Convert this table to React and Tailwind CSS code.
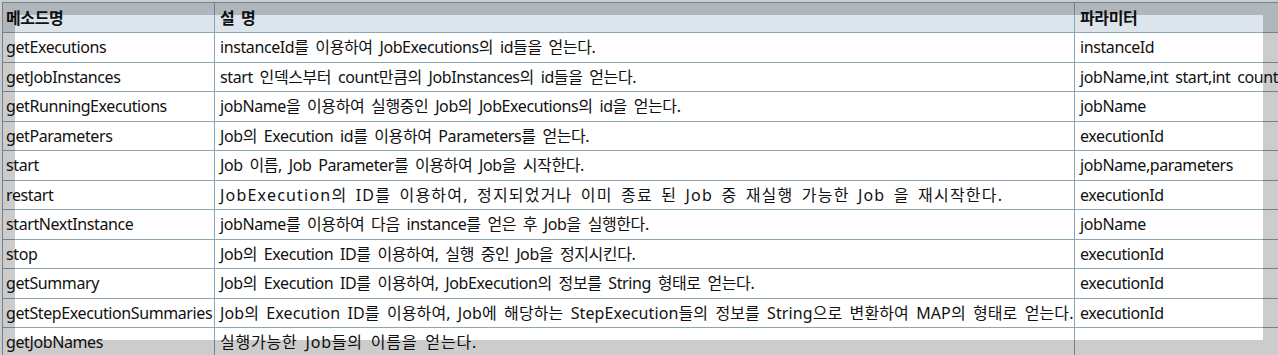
const rows = [
  ["getExecutions", "instanceId를 이용하여 JobExecutions의 id들을 얻는다.", "instanceId"],
  ["getJobInstances", "start 인덱스부터 count만큼의 JobInstances의 id들을 얻는다.", "jobName,int start,int count"],
  ["getRunningExecutions", "jobName을 이용하여 실행중인 Job의 JobExecutions의 id을 얻는다.", "jobName"],
  ["getParameters", "Job의 Execution id를 이용하여 Parameters를 얻는다.", "executionId"],
  ["start", "Job 이름, Job Parameter를 이용하여 Job을 시작한다.", "jobName,parameters"],
  ["restart", "JobExecution의 ID를 이용하여, 정지되었거나 이미 종료 된 Job 중 재실행 가능한 Job 을 재시작한다.", "executionId", "tracking-[1.2px]"],
  ["startNextInstance", "jobName를 이용하여 다음 instance를 얻은 후 Job을 실행한다.", "jobName"],
  ["stop", "Job의 Execution ID를 이용하여, 실행 중인 Job을 정지시킨다.", "executionId"],
  ["getSummary", "Job의 Execution ID를 이용하여, JobExecution의 정보를 String 형태로 얻는다.", "executionId"],
  ["getStepExecutionSummaries", "Job의 Execution ID를 이용하여, Job에 해당하는 StepExecution들의 정보를 String으로 변환하여 MAP의 형태로 얻는다.", "executionId", "tracking-[0.1px]"],
  ["getJobNames", "실행가능한 Job들의 이름을 얻는다.", "", "tracking-[0.8px]"],
];

const cell = "h-[29.5px] border border-[#8ca6b5] px-[5px] whitespace-nowrap";
const head = "h-[30px] border border-[#8ca6b5] px-[5px] text-left font-bold";

export default function App() {
  return (
    <div className="relative w-[1278px] h-[355px] overflow-hidden bg-white font-['Noto_Sans','Noto_Sans_CJK_KR',sans-serif] text-[16px] tracking-[-0.4px] [word-spacing:3px] text-[#111]">
      <div className="pl-[2px] pt-[2px]">
        <table className="table-fixed border-collapse w-[1320px]">
          <colgroup>
            <col className="w-[212px]" />
            <col className="w-[860px]" />
            <col />
          </colgroup>
          <thead>
            <tr className="bg-[#dde5ec]">
              <th className={head + " pl-[3px]"}>메소드명</th>
              <th className={head}>설 명</th>
              <th className={head}>파라미터</th>
            </tr>
          </thead>
          <tbody>
            {rows.map((r) => (
              <tr key={r[0]}>
                <td className={cell + " pl-[3px]"}>{r[0]}</td>
                <td className={cell + " " + (r[3] || "")}>{r[1]}</td>
                <td className={cell}>{r[2]}</td>
              </tr>
            ))}
          </tbody>
        </table>
      </div>
      {/* grey frame laid over the captured table */}
      <div className="pointer-events-none absolute inset-0 border-[15px] border-[rgba(0,0,0,0.2)]" />
    </div>
  );
}
